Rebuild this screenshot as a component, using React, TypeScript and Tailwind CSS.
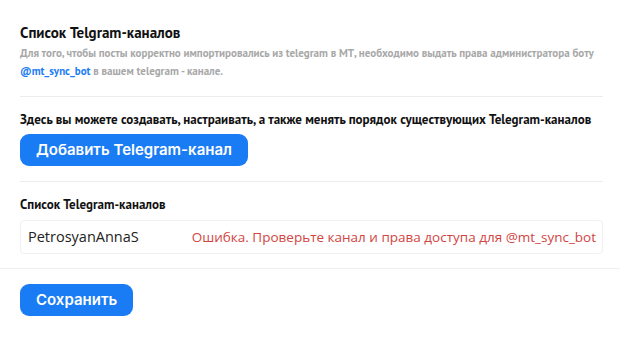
import { useState } from "react";

const BOT = "@mt_sync_bot";

const App = () => {
  const [channel] = useState("PetrosyanAnnaS");

  return (
    <div className="w-[620px] h-[356px] bg-white text-[#111] font-['PT_Sans','Roboto',sans-serif]">
      <div className="px-5 pt-[23px]">
        <h2 className="text-[15px] font-bold leading-[20px]">Список Telgram-каналов</h2>
        <p className="mt-[1px] text-[11px] font-bold leading-[18px] text-[#a8a8a8]">
          Для того, чтобы посты корректно импортировались из telegram в МТ, необходимо выдать права администратора боту{" "}
          <span className="text-[#1a7cf5]">{BOT}</span> в вашем telegram - канале.
        </p>
      </div>

      <div className="ml-5 mr-[17px] mt-[16px] border-t border-[#ececec]" />

      <div className="px-5 pt-[14px]">
        <p className="text-[13px] font-bold leading-[18px] whitespace-nowrap">
          Здесь вы можете создавать, настраивать, а также менять порядок существующих Telegram-каналов
        </p>
        <button className="mt-[5px] h-[32px] px-[16px] rounded-[9px] bg-[#1a7cf5] text-white text-[15px] font-semibold font-['Inter',sans-serif]">
          Добавить Telegram-канал
        </button>
      </div>

      <div className="ml-5 mr-[17px] mt-[15px] border-t border-[#ececec]" />

      <div className="px-5 pt-[14px]">
        <h3 className="text-[13px] font-bold leading-[18px]">Список Telegram-каналов</h3>
        <div className="mt-[6px] mr-[-3px] h-[34px] flex items-center justify-between rounded-[4px] border border-[#f0f0f0] pl-[7px] pr-[6px]">
          <span className="text-[14.5px] font-['Open_Sans',sans-serif] text-[#222]">{channel}</span>
          <span className="text-[13.5px] font-['Open_Sans',sans-serif] text-[#d2453f]">
            Ошибка. Проверьте канал и права доступа для {BOT}
          </span>
        </div>
      </div>

      <div className="mt-[14px] border-t border-[#efefef]" />

      <div className="px-5 pt-[15px]">
        <button className="h-[32px] px-[16px] rounded-[9px] bg-[#1a7cf5] text-white text-[15px] font-semibold font-['Inter',sans-serif]">
          Сохранить
        </button>
      </div>
    </div>
  );
};

export default App;
